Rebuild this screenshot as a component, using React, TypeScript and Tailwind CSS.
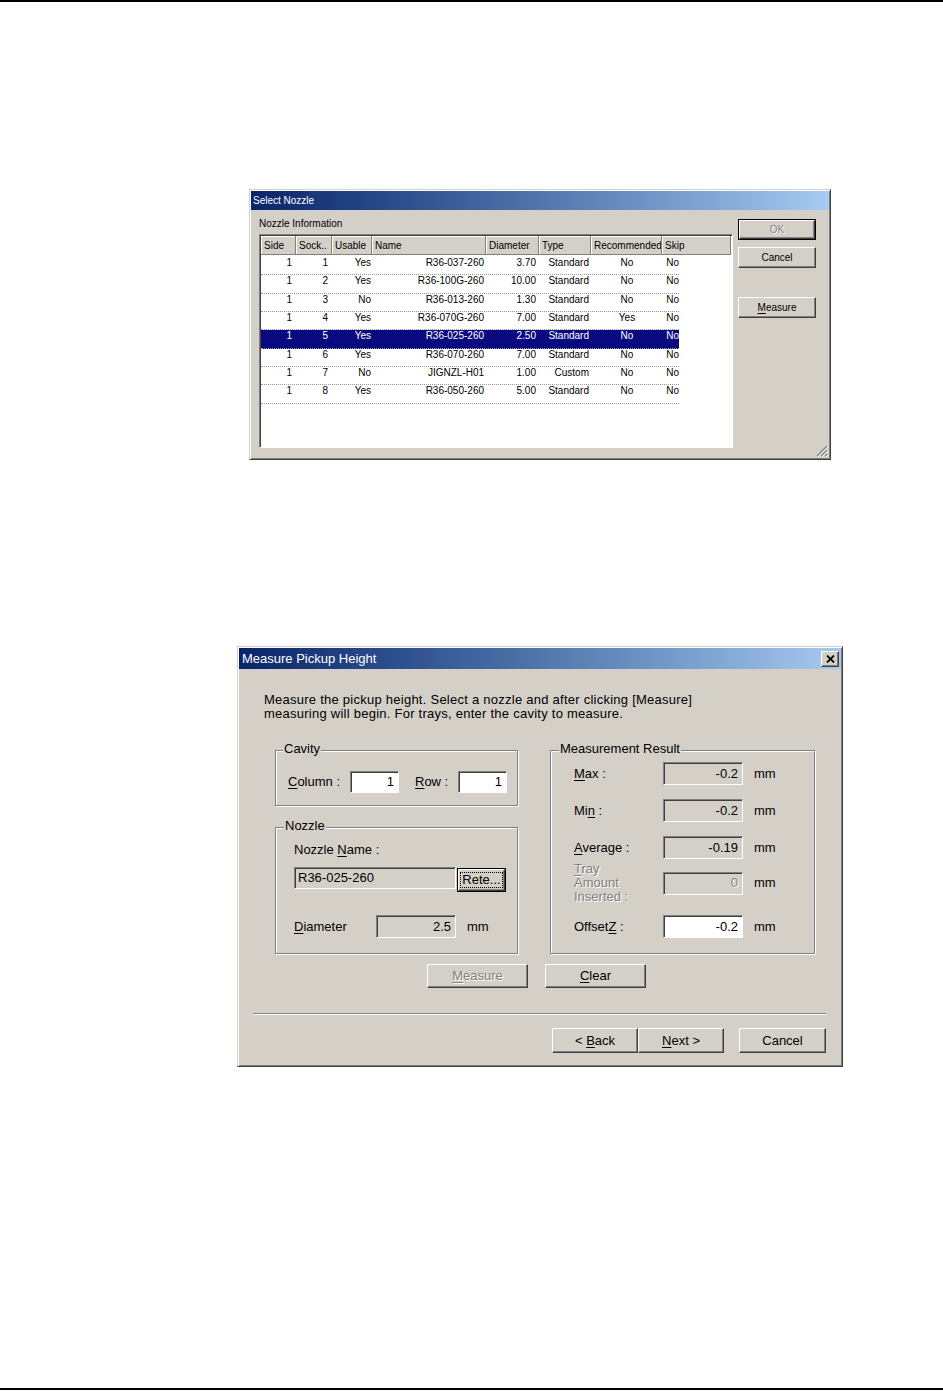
import React from "react";

const frame =
  "border border-t-[#d4d0c8] border-l-[#d4d0c8] border-r-[#404040] border-b-[#404040] shadow-[inset_1px_1px_0_#ffffff,inset_-1px_-1px_0_#808080]";
const raised =
  "bg-[#d4d0c8] border border-t-white border-l-white border-r-[#404040] border-b-[#404040] shadow-[inset_-1px_-1px_0_#808080]";
const sunken =
  "border border-t-[#808080] border-l-[#808080] border-r-white border-b-white shadow-[inset_1px_1px_0_#404040]";
const etched = "border border-[#808080] shadow-[inset_1px_1px_0_#ffffff,1px_1px_0_#ffffff]";
const dim = "text-[#808080] [text-shadow:1px_1px_0_#ffffff]";

function U({ c }: { c: string }) {
  return <span className="underline underline-offset-[2px]">{c}</span>;
}

const cols = [
  { label: "Side", w: "w-[35px]", cell: "justify-end pr-[4px]" },
  { label: "Sock..", w: "w-[36px]", cell: "justify-end pr-[4px]" },
  { label: "Usable", w: "w-[40px]", cell: "justify-end pr-[1px]" },
  { label: "Name", w: "w-[114px]", cell: "justify-end pr-[2px]" },
  { label: "Diameter", w: "w-[53px]", cell: "justify-end pr-[3px]" },
  { label: "Type", w: "w-[52px]", cell: "justify-end pr-[2px]" },
  { label: "Recommended", w: "w-[71px]", cell: "justify-center pl-[1px]" },
  { label: "Skip", w: "w-[17px]", cell: "justify-end" },
];

const rows = [
  ["1", "1", "Yes", "R36-037-260", "3.70", "Standard", "No", "No"],
  ["1", "2", "Yes", "R36-100G-260", "10.00", "Standard", "No", "No"],
  ["1", "3", "No", "R36-013-260", "1.30", "Standard", "No", "No"],
  ["1", "4", "Yes", "R36-070G-260", "7.00", "Standard", "Yes", "No"],
  ["1", "5", "Yes", "R36-025-260", "2.50", "Standard", "No", "No"],
  ["1", "6", "Yes", "R36-070-260", "7.00", "Standard", "No", "No"],
  ["1", "7", "No", "JIGNZL-H01", "1.00", "Custom", "No", "No"],
  ["1", "8", "Yes", "R36-050-260", "5.00", "Standard", "No", "No"],
];

function SelectNozzle() {
  return (
    <div className={`ml-[249px] mt-[187px] w-[582px] h-[271px] bg-[#d4d0c8] p-[1px] flex flex-col relative text-[10px] text-black ${frame}`}>
      <div className="h-[19px] flex items-center pl-[2px] text-white bg-gradient-to-r from-[#0a246a] to-[#a6caf0]">
        Select Nozzle
      </div>
      <div className="flex">
        <div className="ml-[8px] flex flex-col">
          <div className="mt-[7px] leading-[14px]">Nozzle Information</div>
          <div className={`mt-[3px] w-[474px] h-[214px] bg-white ${sunken} p-[1px] flex flex-col`}>
            <div className="flex h-[19px] bg-[#d4d0c8] border-b border-[#808080]">
              {cols.map((c, i) => (
                <div
                  key={c.label}
                  className={`${i === cols.length - 1 ? "flex-1" : c.w} flex items-center pl-[3px] border-r border-[#808080] shadow-[inset_1px_1px_0_#ffffff] whitespace-nowrap overflow-hidden`}
                >
                  {c.label}
                </div>
              ))}
            </div>
            <div className="mt-[2px] flex flex-col">
              {rows.map((r, ri) => {
                const sel = ri === 4;
                return (
                  <div
                    key={ri}
                    className={`flex w-[418px] h-[18.33px] border-b border-dotted border-[#9a9a9a] ${sel ? "bg-[#0a0a80] text-white" : ""}`}
                  >
                    {r.map((v, ci) => (
                      <div key={ci} className={`${cols[ci].w} flex items-start leading-[12px] whitespace-nowrap ${cols[ci].cell}`}>
                        {v}
                      </div>
                    ))}
                  </div>
                );
              })}
            </div>
          </div>
        </div>
        <div className="ml-[5px] w-[78px] flex flex-col">
          <div className="mt-[9px] h-[21px] border border-black">
            <div className={`h-full flex items-center justify-center ${raised} ${dim}`}>OK</div>
          </div>
          <div className={`mt-[7px] h-[21px] flex items-center justify-center ${raised}`}>Cancel</div>
          <div className={`mt-[29px] h-[21px] flex items-center justify-center ${raised}`}>
            <span>
              <U c="M" />
              easure
            </span>
          </div>
        </div>
      </div>
      <svg className="absolute right-[2px] bottom-[2px]" width="12" height="12" viewBox="0 0 12 12">
        <path d="M11 1 L1 11 M11 5 L5 11 M11 9 L9 11" stroke="#808080" strokeWidth="1.2" />
        <path d="M12 2 L2 12 M12 6 L6 12 M12 10 L10 12" stroke="#ffffff" strokeWidth="1" />
      </svg>
    </div>
  );
}

function Field({ className, value, white, disabled }: { className: string; value: string; white?: boolean; disabled?: boolean }) {
  return (
    <div className={`${className} ${sunken} flex items-center justify-end pr-[4px] ${white ? "bg-white" : "bg-[#d4d0c8]"} ${disabled ? dim : ""}`}>
      {value}
    </div>
  );
}

function ResultRow({ label, value, white, top }: { label: React.ReactNode; value: string; white?: boolean; top: string }) {
  return (
    <div className={`flex items-center ${top}`}>
      <div className="w-[89px] leading-[14px]">{label}</div>
      <Field className="w-[80px] h-[23px]" value={value} white={white} />
      <span className="ml-[11px]">mm</span>
    </div>
  );
}

function MeasurePickup() {
  return (
    <div className={`ml-[237px] mt-[186px] w-[606px] h-[421px] bg-[#d4d0c8] p-[1px] flex flex-col text-[13px] text-black ${frame}`}>
      <div className="h-[21px] flex items-center justify-between pl-[3px] pr-[2px] text-white bg-gradient-to-r from-[#0a246a] to-[#a6caf0]">
        <span>Measure Pickup Height</span>
        <div className={`w-[18px] h-[16px] flex items-center justify-center ${raised}`}>
          <svg width="9" height="8" viewBox="0 0 9 8">
            <path d="M1 0.5 L8 7.5 M8 0.5 L1 7.5" stroke="#000" strokeWidth="1.8" />
          </svg>
        </div>
      </div>

      <div className="ml-[25px] mt-[24px] leading-[14px] tracking-[0.25px]">
        <div>Measure the pickup height. Select a nozzle and after clicking [Measure]</div>
        <div>measuring will begin. For trays, enter the cavity to measure.</div>
      </div>

      <div className="flex mt-[29px]">
        <div className="ml-[36px] w-[243px] flex flex-col">
          <div className={`relative h-[56px] ${etched} pl-[12px] pt-[20px] flex items-start`}>
            <span className="absolute -top-[9px] left-[7px] px-[1px] leading-[14px] bg-[#d4d0c8]">Cavity</span>
            <div className="w-[62px] leading-[22px]">
              <U c="C" />
              olumn :
            </div>
            <Field className="w-[49px] h-[22px]" value="1" white />
            <div className="ml-[16px] w-[43px] leading-[22px]">
              <U c="R" />
              ow :
            </div>
            <Field className="w-[49px] h-[22px]" value="1" white />
          </div>

          <div className={`relative mt-[21px] h-[127px] ${etched} pl-[18px] pt-[15px] flex flex-col`}>
            <span className="absolute -top-[9px] left-[8px] px-[1px] leading-[14px] bg-[#d4d0c8]">Nozzle</span>
            <div className="leading-[14px]">
              Nozzle <U c="N" />
              ame :
            </div>
            <div className="flex items-start mt-[10px]">
              <div className={`w-[162px] h-[22px] ${sunken} bg-[#d4d0c8] flex items-center pl-[3px]`}>R36-025-260</div>
              <div className="ml-[1px] mt-[1px] w-[49px] h-[24px] border border-black">
                <div className={`h-full flex items-center justify-center ${raised}`}>
                  <span className="border border-dotted border-black px-[1px] leading-[14px]">Rete...</span>
                </div>
              </div>
            </div>
            <div className="flex items-center mt-[23px]">
              <div className="w-[82px]">
                <U c="D" />
                iameter
              </div>
              <Field className="w-[80px] h-[23px]" value="2.5" />
              <span className="ml-[11px]">mm</span>
            </div>
          </div>
        </div>

        <div className={`relative ml-[32px] w-[265px] h-[204px] ${etched} pl-[23px] pt-[11px] flex flex-col`}>
          <span className="absolute -top-[9px] left-[8px] px-[1px] leading-[14px] bg-[#d4d0c8]">Measurement Result</span>
          <ResultRow
            top=""
            value="-0.2"
            label={
              <>
                <U c="M" />
                ax :
              </>
            }
          />
          <ResultRow
            top="mt-[14px]"
            value="-0.2"
            label={
              <>
                Mi
                <U c="n" /> :
              </>
            }
          />
          <ResultRow
            top="mt-[14px]"
            value="-0.19"
            label={
              <>
                <U c="A" />
                verage :
              </>
            }
          />
          <div className="flex items-center mt-[3px]">
            <div className={`w-[89px] leading-[14px] ${dim}`}>
              <div>
                <U c="T" />
                ray
              </div>
              <div>Amount</div>
              <div>Inserted :</div>
            </div>
            <Field className="w-[80px] h-[23px]" value="0" disabled />
            <span className="ml-[11px]">mm</span>
          </div>
          <ResultRow
            top="mt-[11px]"
            value="-0.2"
            white
            label={
              <>
                Offset
                <U c="Z" /> :
              </>
            }
          />
        </div>
      </div>

      <div className="flex mt-[10px] ml-[188px]">
        <div className={`w-[101px] h-[24px] flex items-center justify-center ${raised} ${dim}`}>
          <span>
            <U c="M" />
            easure
          </span>
        </div>
        <div className={`ml-[17px] w-[101px] h-[24px] flex items-center justify-center ${raised}`}>
          <span>
            <U c="C" />
            lear
          </span>
        </div>
      </div>

      <div className="ml-[14px] mt-[25px] w-[573px] h-[2px] border-t border-[#808080] border-b border-b-white" />

      <div className="flex mt-[13px] ml-[313px]">
        <div className={`w-[86px] h-[25px] flex items-center justify-center ${raised}`}>
          <span>
            &lt; <U c="B" />
            ack
          </span>
        </div>
        <div className={`w-[86px] h-[25px] flex items-center justify-center ${raised}`}>
          <span>
            <U c="N" />
            ext &gt;
          </span>
        </div>
        <div className={`ml-[15px] w-[87px] h-[25px] flex items-center justify-center ${raised}`}>Cancel</div>
      </div>
    </div>
  );
}

export default function App() {
  return (
    <div className="w-[943px] h-[1391px] bg-white flex flex-col font-['Liberation_Sans',Arial,sans-serif]">
      <div className="h-[2px] bg-black shrink-0" />
      <SelectNozzle />
      <MeasurePickup />
      <div className="mt-auto mb-[1px] h-[2px] bg-black shrink-0" />
    </div>
  );
}
